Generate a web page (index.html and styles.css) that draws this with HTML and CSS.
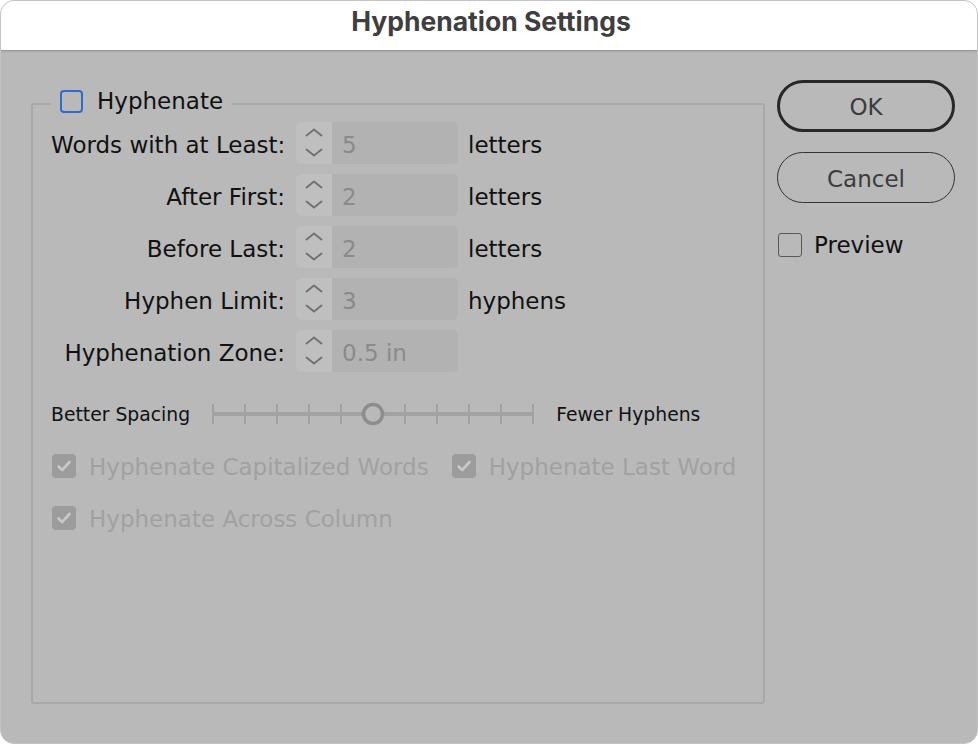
FILE: index.html
```html
<!DOCTYPE html>
<html lang="en">
<head>
  <meta charset="UTF-8" />
  <title>Hyphenation Settings</title>
  <link rel="stylesheet" href="styles.css">
</head>
<body>

<div class="window">
  <header class="titlebar">
    <h1>Hyphenation Settings</h1>
  </header>

  <div class="content">
    <fieldset class="group">
      <legend class="legend">
        <span class="check check-blue"></span>
        <span>Hyphenate</span>
      </legend>

      <div class="rows">
        <label class="label">Words with at Least:</label>
        <div class="spinner">
          <span class="arrows">
            <svg width="18" height="30" viewBox="0 0 18 30"><path d="M1.5 7.5 L9 1.5 L16.5 7.5 M1.5 21.5 L9 27.5 L16.5 21.5" /></svg>
          </span>
          <span class="value">5</span>
        </div>
        <span class="unit">letters</span>

        <label class="label">After First:</label>
        <div class="spinner">
          <span class="arrows">
            <svg width="18" height="30" viewBox="0 0 18 30"><path d="M1.5 7.5 L9 1.5 L16.5 7.5 M1.5 21.5 L9 27.5 L16.5 21.5" /></svg>
          </span>
          <span class="value">2</span>
        </div>
        <span class="unit">letters</span>

        <label class="label">Before Last:</label>
        <div class="spinner">
          <span class="arrows">
            <svg width="18" height="30" viewBox="0 0 18 30"><path d="M1.5 7.5 L9 1.5 L16.5 7.5 M1.5 21.5 L9 27.5 L16.5 21.5" /></svg>
          </span>
          <span class="value">2</span>
        </div>
        <span class="unit">letters</span>

        <label class="label">Hyphen Limit:</label>
        <div class="spinner">
          <span class="arrows">
            <svg width="18" height="30" viewBox="0 0 18 30"><path d="M1.5 7.5 L9 1.5 L16.5 7.5 M1.5 21.5 L9 27.5 L16.5 21.5" /></svg>
          </span>
          <span class="value">3</span>
        </div>
        <span class="unit">hyphens</span>

        <label class="label">Hyphenation Zone:</label>
        <div class="spinner">
          <span class="arrows">
            <svg width="18" height="30" viewBox="0 0 18 30"><path d="M1.5 7.5 L9 1.5 L16.5 7.5 M1.5 21.5 L9 27.5 L16.5 21.5" /></svg>
          </span>
          <span class="value">0.5 in</span>
        </div>
        <span class="unit"></span>
      </div>

      <div class="slider-row">
        <span>Better Spacing</span>
        <svg class="slider" width="322" height="24" viewBox="0 0 322 24">
          <line class="track" x1="1" y1="12" x2="321" y2="12" />
          <g class="ticks">
            <line x1="1" y1="2" x2="1" y2="22" />
            <line x1="33" y1="2" x2="33" y2="22" />
            <line x1="65" y1="2" x2="65" y2="22" />
            <line x1="97" y1="2" x2="97" y2="22" />
            <line x1="129" y1="2" x2="129" y2="22" />
            <line x1="193" y1="2" x2="193" y2="22" />
            <line x1="225" y1="2" x2="225" y2="22" />
            <line x1="257" y1="2" x2="257" y2="22" />
            <line x1="289" y1="2" x2="289" y2="22" />
            <line x1="321" y1="2" x2="321" y2="22" />
          </g>
          <circle class="knob" cx="161" cy="12" r="9.5" />
        </svg>
        <span>Fewer Hyphens</span>
      </div>

      <div class="option-row">
        <span class="option">
          <span class="check check-off">
            <svg width="24" height="24" viewBox="0 0 24 24"><path d="M6.5 12.5 L10.2 16 L17.5 8" /></svg>
          </span>
          Hyphenate Capitalized Words
        </span>
        <span class="option">
          <span class="check check-off">
            <svg width="24" height="24" viewBox="0 0 24 24"><path d="M6.5 12.5 L10.2 16 L17.5 8" /></svg>
          </span>
          Hyphenate Last Word
        </span>
      </div>

      <div class="option-row">
        <span class="option">
          <span class="check check-off">
            <svg width="24" height="24" viewBox="0 0 24 24"><path d="M6.5 12.5 L10.2 16 L17.5 8" /></svg>
          </span>
          Hyphenate Across Column
        </span>
      </div>
    </fieldset>

    <div class="side">
      <button class="button button-default">OK</button>
      <button class="button">Cancel</button>
      <div class="preview">
        <span class="check check-plain"></span>
        <span>Preview</span>
      </div>
    </div>
  </div>
</div>

</body>
</html>
```

FILE: styles.css
```css
:root {
  --fondo: #b9b9b9;
  --linea: #a8a8a8;
  --texto: #111111;
  --apagado: #a1a1a1;
}

html {
  background-color: #ffffff;
}

body {
  margin: 0;
  font-family: 'DejaVu Sans', Verdana, sans-serif;
  color: var(--texto);
}

.window {
  width: 978px;
  height: 744px;
  box-sizing: border-box;
  border: 1px solid #c3c3c3;
  border-radius: 14px;
  overflow: hidden;
  background-color: var(--fondo);
  display: flex;
  flex-direction: column;
}

.titlebar {
  height: 49px;
  background-color: #ffffff;
  border-bottom: 1px solid #959595;
  box-shadow: 0 1px 2px rgba(0, 0, 0, 0.08);
  display: flex;
  align-items: center;
  justify-content: center;
}

.titlebar h1 {
  margin: 0 0 10px 4px;
  font-family: Inter, 'Open Sans', sans-serif;
  font-weight: 700;
  font-size: 26.5px;
  color: #3f3f3f;
}

.content {
  flex: 1;
  display: flex;
  padding: 29px 22px 39px 30px;
}

.group {
  margin: 9px 0 0 0;
  width: 734px;
  box-sizing: border-box;
  border: 2px solid var(--linea);
  border-radius: 3px;
  padding: 3px 0 0 18px;
  min-width: 0;
}

.legend {
  display: flex;
  align-items: center;
  gap: 14px;
  padding: 0 9px 6px 9px;
  font-size: 23px;
  line-height: 24px;
}

.check {
  width: 24px;
  height: 24px;
  box-sizing: border-box;
  border-radius: 4px;
  display: inline-flex;
  flex: none;
}

.check-blue {
  width: 23px;
  height: 23px;
  border: 2px solid #2e6bd1;
  border-radius: 4px;
}

.check-plain {
  width: 24px;
  height: 24px;
  border: 1.5px solid #5a5a5a;
  border-radius: 3px;
}

.check-off {
  background-color: #9c9c9c;
}

.check-off path {
  fill: none;
  stroke: #c9c9c9;
  stroke-width: 2.6;
  stroke-linecap: round;
  stroke-linejoin: round;
}

.rows {
  display: grid;
  grid-template-columns: 234px 162px auto;
  column-gap: 11px;
  row-gap: 10px;
  align-items: center;
  font-size: 23px;
}

.label,
.unit {
  padding-top: 3px;
  white-space: nowrap;
}

.label {
  text-align: right;
}

.unit {
  margin-left: -1px;
}

.spinner {
  height: 42px;
  display: flex;
  border-radius: 5px;
  overflow: hidden;
  background-color: #b2b2b2;
}

.arrows {
  width: 36px;
  background-color: #bfbfbf;
  display: flex;
  align-items: center;
  justify-content: center;
}

.arrows path {
  fill: none;
  stroke: #6f6f6f;
  stroke-width: 1.8;
  stroke-linecap: round;
  stroke-linejoin: round;
}

.value {
  padding: 3px 0 0 10px;
  display: flex;
  align-items: center;
  color: #8a8a8a;
}

.slider-row {
  margin-top: 30px;
  height: 24px;
  display: flex;
  align-items: center;
  gap: 22px;
  font-size: 18.8px;
}

.slider .track {
  stroke: #a2a2a2;
  stroke-width: 4;
}

.slider .ticks line {
  stroke: #a2a2a2;
  stroke-width: 2;
}

.knob {
  fill: var(--fondo);
  stroke: #8d8d8d;
  stroke-width: 3.5;
}

.option-row {
  margin-top: 28px;
  height: 24px;
  display: flex;
  gap: 22px;
  font-size: 23px;
  color: var(--apagado);
}

.option {
  display: flex;
  align-items: center;
  gap: 13px;
  margin-left: 1px;
  padding-top: 2px;
  white-space: nowrap;
}

.option .check {
  margin-top: -2px;
}

.side {
  margin-left: 12px;
  width: 178px;
  display: flex;
  flex-direction: column;
}

.button {
  height: 51px;
  border: 1.5px solid #333333;
  border-radius: 26px;
  background-color: var(--fondo);
  font-family: 'DejaVu Sans', Verdana, sans-serif;
  font-size: 23px;
  color: #3c3c3c;
  padding: 2px 0 0 0;
}

.button-default {
  height: 52px;
  border: 3.5px solid #282828;
  margin-bottom: 20px;
}

.preview {
  margin-top: 29px;
  margin-left: 1px;
  display: flex;
  align-items: center;
  gap: 12px;
  font-size: 23px;
}
```
